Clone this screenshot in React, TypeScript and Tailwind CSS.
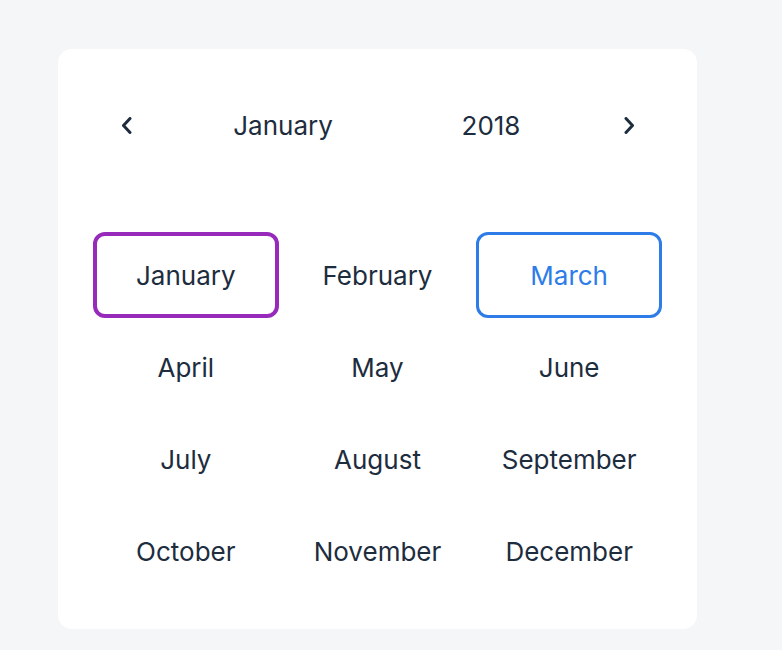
const months = [
  "January", "February", "March",
  "April", "May", "June",
  "July", "August", "September",
  "October", "November", "December",
]

function Chevron({ dir }: { dir: "left" | "right" }) {
  const points = dir === "left" ? "9,1.5 2.5,8.5 9,15.5" : "2,1.5 8.5,8.5 2,15.5"
  return (
    <svg width="11" height="17" viewBox="0 0 11 17" fill="none">
      <polyline
        points={points}
        stroke="#1d2d3e"
        strokeWidth="3"
        strokeLinecap="round"
        strokeLinejoin="round"
      />
    </svg>
  )
}

function MonthCell({ name }: { name: string }) {
  const base = "h-[86px] flex items-center justify-center rounded-xl text-[26px]"
  if (name === "January") {
    return <div className={`${base} border-4 border-[#972abb] text-[#1d2d3e]`}>{name}</div>
  }
  if (name === "March") {
    return <div className={`${base} border-[3px] border-[#2e7ce8] text-[#2e7ce8]`}>{name}</div>
  }
  return <div className={`${base} text-[#1d2d3e]`}>{name}</div>
}

export default function App() {
  return (
    <div
      className="min-h-[650px] w-full bg-[#f5f6f7] pt-[49px] pl-[58px]"
      style={{ fontFamily: "Inter, 'Noto Sans', sans-serif" }}
    >
      <div className="w-[639px] h-[580px] bg-white rounded-[14px] px-[35px] pt-[56px]">
        {/* Header */}
        <div className="flex items-center h-10 text-[26px] text-[#1d2d3e]">
          <div className="w-[66px] flex justify-center">
            <Chevron dir="left" />
          </div>
          <div className="w-[248px] text-center">January</div>
          <div className="w-[168px] text-center">2018</div>
          <div className="flex-1" />
          <div className="w-[66px] flex justify-center">
            <Chevron dir="right" />
          </div>
        </div>

        {/* Month grid */}
        <div className="grid grid-cols-3 gap-[6px] mt-[87px]">
          {months.map((m) => (
            <MonthCell key={m} name={m} />
          ))}
        </div>
      </div>
    </div>
  )
}
